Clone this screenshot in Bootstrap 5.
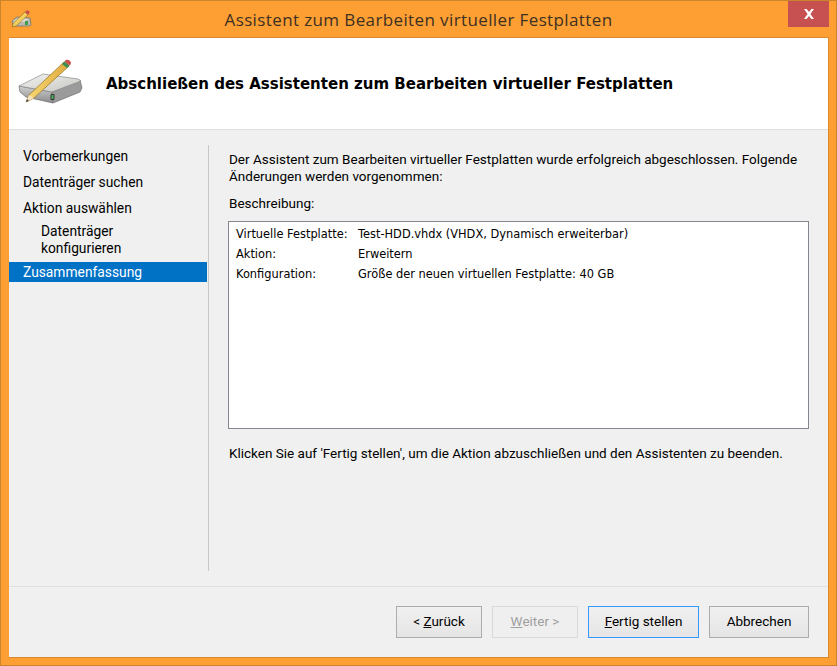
<!DOCTYPE html>
<html lang="de"><head><meta charset="utf-8"><title>Assistent</title>
<link rel="stylesheet" href="https://cdn.jsdelivr.net/npm/bootstrap@5.3.0/dist/css/bootstrap.min.css">
<style>
html,body{height:100%;margin:0;overflow:hidden}
body{background:#fd9f32;font-family:Roboto,"Open Sans",sans-serif;color:#000}
.frame-win{width:837px;height:666px;border:1px solid #cc842c;display:flex;flex-direction:column}
.title-row{height:36px;flex:none;position:relative}
.win-icon{position:absolute;left:9px;top:8px}
.title-text{font-family:"Open Sans",sans-serif;font-size:17px;line-height:38px;color:#3c3024;text-align:center;letter-spacing:.0225em}
.close-x{position:absolute;left:787px;top:0;width:41px;height:26px;background:#c75050;display:flex;align-items:center;justify-content:center}
.client{height:621px;flex:none;margin:0 0 0 8px;background:#f0f0f0;border-top:1px solid #d98a2e;border-right:1px solid #d98a2e;border-bottom:1px solid #d98a2e;display:flex;flex-direction:column;width:820px}
.head-band{height:92px;flex:none;background:#fff;border-bottom:1px solid #dfdfdf;display:flex;align-items:flex-start}
.head-band svg{margin:20px 0 0 9px;flex:none}
.head-title{font-family:"DejaVu Sans",sans-serif;font-weight:700;font-size:15px;line-height:20px;margin:36px 0 0 22px}
.mid{flex:1;display:flex;min-height:0;padding-top:13px}
.side{width:199px;flex:none;font-size:13.8px;line-height:17px}
.side-item{padding:0 14px;height:26px;display:flex;align-items:center}
.side-sub{padding:2px 14px 0 32px;height:41px;line-height:17px}
.side-on{background:#0072c6;color:#fff;height:20px;width:198px}
.sep{width:1px;flex:none;height:426px;margin:2px 19px 0 0;background:#c8c8c8}
.content{width:581px;font-size:13.5px;line-height:17px;padding-top:8px}
.content p{margin:0;padding-left:1px}
.desc-label{margin-top:10px!important}
.box-area{margin-top:9px;height:208px;background:#fff;border:1px solid #828790;padding:2px 7px;font-family:"DejaVu Sans",sans-serif;font-size:11.4px;line-height:20px}
.box-line{display:flex;white-space:nowrap}
.box-key{width:122px;flex:none}
.hint{margin-top:16px!important;white-space:nowrap}
.foot{height:71px;flex:none;border-top:1px solid #dfdfdf;display:flex;justify-content:flex-end;padding:19px 19px 0 0;gap:10px}
.dlg-btn{height:32px;flex:none;border:1px solid #acacac;background:linear-gradient(#f0f0f0,#e5e5e5);font-size:13.5px;line-height:26px;padding:0 0 2px;text-align:center;color:#000;border-radius:0;white-space:nowrap}
.dlg-btn:disabled{opacity:1;color:#a0a0a0;border-color:#d9d9d9;background:#efefef}
.dlg-btn.is-default{border-color:#3399ff}
.wd-86{width:86px}.wd-111{width:111px}.wd-100{width:100px}
</style></head><body>
<div class="frame-win">
 <div class="title-row">
  <svg class="win-icon" width="22" height="20" viewBox="10 9 22 20"><path d="M12 21 17 17 30 18 31 25 29 26 13 26z" fill="#b9b9b0" stroke="#77776c" stroke-width=".8"/><path d="M13 21 18 18 29 19 24 22z" fill="#dedbd0"/><rect x="25" y="21" width="3" height="4" fill="#3f9e4c"/><path d="M12 27 13.500 23 25 12 28 15 16 26z" fill="#f2cf5f" stroke="#8a6a20" stroke-width=".6"/><path d="M25 12 27 10 30 12 28 15z" fill="#c9504b"/></svg>
  <div class="title-text">Assistent zum Bearbeiten virtueller Festplatten</div>
  <div class="close-x"><svg width="12" height="10" viewBox="0 0 12 10"><path d="M1 0h2.600L6 3l2.400-3H11L7.400 5 11 10H8.400L6 7 3.600 10H1l3.600-5z" fill="#fff"/></svg></div>
 </div>
 <div class="client">
  <div class="head-band">
   <svg width="66" height="50" viewBox="18 58 66 50"><defs><linearGradient id="g1" x1="0" y1="0" x2="0" y2="1"><stop offset="0" stop-color="#d0d0d0"/><stop offset="1" stop-color="#8a8a8a"/></linearGradient><linearGradient id="g2" x1="0" y1="0" x2="1" y2="1"><stop offset="0" stop-color="#f4f4f2"/><stop offset="1" stop-color="#c4c4c0"/></linearGradient><linearGradient id="g3" x1="0" y1="0" x2="1" y2="0"><stop offset="0" stop-color="#f6d878"/><stop offset="1" stop-color="#e0ac3c"/></linearGradient></defs>
   <path d="M19 86 52 92 53 103 26 97 20 92z" fill="url(#g1)" stroke="#6f6f6f" stroke-width=".7"/>
   <path d="M52 92 80 80 82 88 80 92 53 103z" fill="#9b9b9b" stroke="#6f6f6f" stroke-width=".7"/>
   <path d="M19 86 43 74 78 79 81 81 52 92z" fill="url(#g2)" stroke="#8a8a8a" stroke-width=".7"/>
   <rect x="50.500" y="94" width="4" height="6" rx="1" fill="#333"/><rect x="51.500" y="95" width="2" height="4" fill="#49b35c"/>
   <path d="M26 102 29 95 64 62 69 66 34 98z" fill="url(#g3)" stroke="#93701f" stroke-width=".7"/>
   <path d="M26 102 29 95 34 98z" fill="#f3e2bd"/><path d="M26 102 27 99 29 101z" fill="#444"/>
   <path d="M62 64 64.500 61.500 69.500 65.500 67 68z" fill="#3d8f54"/><path d="M64.500 61.500c1-2 3-2.500 5-1s2 3.500 0 5z" fill="#c94f4a"/></svg>
   <div class="head-title">Abschließen des Assistenten zum Bearbeiten virtueller Festplatten</div>
  </div>
  <div class="mid">
   <div class="side">
    <div class="side-item">Vorbemerkungen</div>
    <div class="side-item">Datenträger suchen</div>
    <div class="side-item">Aktion auswählen</div>
    <div class="side-sub">Datenträger<br>konfigurieren</div>
    <div class="side-item side-on">Zusammenfassung</div>
   </div>
   <div class="sep"></div>
   <div class="content">
    <p>Der Assistent zum Bearbeiten virtueller Festplatten wurde erfolgreich abgeschlossen. Folgende Änderungen werden vorgenommen:</p>
    <p class="desc-label">Beschreibung:</p>
    <div class="box-area">
     <div class="box-line"><span class="box-key">Virtuelle Festplatte:</span><span>Test-HDD.vhdx (VHDX, Dynamisch erweiterbar)</span></div>
     <div class="box-line"><span class="box-key">Aktion:</span><span>Erweitern</span></div>
     <div class="box-line"><span class="box-key">Konfiguration:</span><span>Größe der neuen virtuellen Festplatte: 40 GB</span></div>
    </div>
    <p class="hint">Klicken Sie auf 'Fertig stellen', um die Aktion abzuschließen und den Assistenten zu beenden.</p>
   </div>
  </div>
  <div class="foot">
   <button class="btn dlg-btn wd-86">&lt; <u>Z</u>urück</button>
   <button class="btn dlg-btn wd-86" disabled><u>W</u>eiter &gt;</button>
   <button class="btn dlg-btn wd-111 is-default"><u>F</u>ertig stellen</button>
   <button class="btn dlg-btn wd-100">Abbrechen</button>
  </div>
 </div>
</div>
<script src="https://cdn.jsdelivr.net/npm/bootstrap@5.3.0/dist/js/bootstrap.bundle.min.js"></script>
</body></html>
